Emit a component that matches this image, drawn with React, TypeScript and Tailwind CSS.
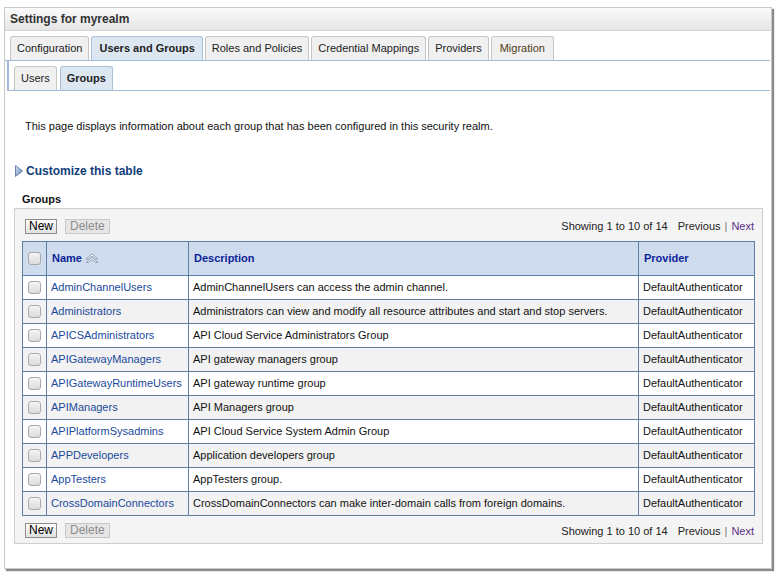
const groups = [
  { name: "AdminChannelUsers", desc: "AdminChannelUsers can access the admin channel." },
  { name: "Administrators", desc: "Administrators can view and modify all resource attributes and start and stop servers." },
  { name: "APICSAdministrators", desc: "API Cloud Service Administrators Group" },
  { name: "APIGatewayManagers", desc: "API gateway managers group" },
  { name: "APIGatewayRuntimeUsers", desc: "API gateway runtime group" },
  { name: "APIManagers", desc: "API Managers group" },
  { name: "APIPlatformSysadmins", desc: "API Cloud Service System Admin Group" },
  { name: "APPDevelopers", desc: "Application developers group" },
  { name: "AppTesters", desc: "AppTesters group." },
  { name: "CrossDomainConnectors", desc: "CrossDomainConnectors can make inter-domain calls from foreign domains." },
];

const tabs = [
  "Configuration",
  "Users and Groups",
  "Roles and Policies",
  "Credential Mappings",
  "Providers",
  "Migration",
];

const Checkbox = () => (
  <span className="inline-block w-[13px] h-[13px] rounded-[3px] border border-[#a9a9a9] bg-gradient-to-b from-[#f4f4f4] to-[#dcdcdc] align-middle" />
);

const Buttons = () => (
  <div className="flex gap-[8px]">
    <button className="h-[15px] px-[3px] border border-[#8c8c8c] bg-gradient-to-b from-[#fdfdfd] to-[#e2e2e2] text-[12px] leading-[13px] text-black">
      New
    </button>
    <button className="h-[15px] px-[4px] border border-[#c8c8c8] bg-[#e6e6e6] text-[12px] leading-[13px] text-[#8c8c8c]">
      Delete
    </button>
  </div>
);

const Pager = () => (
  <div className="text-[11px] text-[#222]">
    Showing 1 to 10 of 14
    <span className="ml-[10px]">Previous</span>
    <span className="mx-[4px] text-[#777]">|</span>
    <span className="text-[#5b2e86]">Next</span>
  </div>
);

const SortIcon = () => (
  <svg width="14" height="10" viewBox="0 0 14 10" className="inline-block ml-[3px] align-[-1px]">
    <path d="M1 6 L7 1 L13 6 L11 6 L7 3 L3 6 Z" fill="#fff" stroke="#8a9bb5" strokeWidth="0.9" />
    <path d="M1 9.5 L7 4.5 L13 9.5 L11 9.5 L7 6.5 L3 9.5 Z" fill="#fff" stroke="#8a9bb5" strokeWidth="0.9" />
  </svg>
);

export default function App() {
  return (
    <div className="w-[778px] h-[577px] bg-white pt-[7px] pl-[4px] font-['Liberation_Sans',Arial,sans-serif]">
      <div className="w-[768px] h-[562px] border border-[#c9c9c9] bg-white shadow-[2px_2px_1px_#8a8a8a]">
        {/* title bar */}
        <div className="h-[23px] px-[5px] flex items-center bg-gradient-to-b from-[#fbfbfb] to-[#e5e5e5] border-b border-[#d4d4d4] text-[12px] font-bold text-[#333]">
          Settings for myrealm
        </div>

        {/* main tabs */}
        <div className="mt-[5px] pl-[5px] flex gap-[2px] border-b border-[#9fbad6] mr-[1px]">
          {tabs.map((t) => {
            const active = t === "Users and Groups";
            return (
              <div
                key={t}
                className={
                  active
                    ? "h-[24px] px-[7px] flex items-center rounded-t-[3px] border border-b-0 border-[#a9c0d9] bg-[#dce7f2] text-[11px] font-bold text-[#222]"
                    : t === "Migration"
                    ? "h-[24px] px-[8px] flex items-center rounded-t-[3px] border border-b-0 border-[#c6c6c6] bg-[#f0f0f0] text-[11px] text-[#4e3d16]"
                    : "h-[24px] px-[6px] flex items-center rounded-t-[3px] border border-b-0 border-[#c6c6c6] bg-[#f0f0f0] text-[11px] text-[#222]"
                }
              >
                {t}
              </div>
            );
          })}
        </div>

        {/* sub tabs */}
        <div className="ml-[2px] mr-[1px] pt-[5px] pl-[5px] flex gap-[3px] border-l-2 border-b border-[#9fbad6]">
          <div className="h-[24px] px-[6px] flex items-center rounded-t-[3px] border border-b-0 border-[#c6c6c6] bg-[#f0f0f0] text-[11px] text-[#222]">
            Users
          </div>
          <div className="h-[24px] px-[6px] flex items-center rounded-t-[3px] border border-b-0 border-[#a9c0d9] bg-[#dce7f2] text-[11px] font-bold text-[#222]">
            Groups
          </div>
        </div>

        <p className="mt-[27px] ml-[20px] text-[11px] text-[#111]">
          This page displays information about each group that has been configured in this security realm.
        </p>

        <div className="mt-[27px] ml-[10px] flex items-center gap-[3px] text-[12px] font-bold text-[#11407a]">
          <svg width="8" height="12" viewBox="0 0 8 12">
            <defs>
              <linearGradient id="tri" x1="0" y1="0" x2="1" y2="1">
                <stop offset="0" stopColor="#dbe6f3" />
                <stop offset="1" stopColor="#5d7fb0" />
              </linearGradient>
            </defs>
            <path d="M0.5 0.5 L7.5 6 L0.5 11.5 Z" fill="url(#tri)" stroke="#4c6c9c" strokeWidth="0.8" />
          </svg>
          Customize this table
        </div>

        <div className="mt-[11px] ml-[17px] text-[11px] font-bold text-[#111]">Groups</div>

        <div className="mt-[1px] ml-[9px] w-[749px] h-[336px] border border-[#cfcfcf] bg-[#f4f4f4] pt-[9px] px-[7px]">
          <div className="flex items-center justify-between pl-[3px] pr-[1px]">
            <Buttons />
            <Pager />
          </div>

          <table className="mt-[6px] w-[733px] border-collapse bg-white text-[11px]">
            <thead>
              <tr className="h-[34px] bg-[#cfdcee]">
                <th className="w-[24px] border border-[#5f7ea3] text-center"><Checkbox /></th>
                <th className="w-[142px] border border-[#5f7ea3] text-left pl-[5px] text-[11px] font-bold text-[#0d1f99]">
                  Name<SortIcon />
                </th>
                <th className="w-[450px] border border-[#5f7ea3] text-left pl-[5px] text-[11px] font-bold text-[#0d1f99]">
                  Description
                </th>
                <th className="border border-[#5f7ea3] text-left pl-[5px] text-[11px] font-bold text-[#0d1f99]">
                  Provider
                </th>
              </tr>
            </thead>
            <tbody>
              {groups.map((g, i) => (
                <tr key={g.name} className={i % 2 === 1 ? "h-[24px] bg-[#f2f2f2]" : "h-[24px] bg-white"}>
                  <td className="border border-[#5f7ea3] text-center"><Checkbox /></td>
                  <td className="border border-[#5f7ea3] pl-[4px] text-[#1a4a9a]">{g.name}</td>
                  <td className="border border-[#5f7ea3] pl-[4px] text-[#111]">{g.desc}</td>
                  <td className="border border-[#5f7ea3] pl-[4px] text-[#111]">DefaultAuthenticator</td>
                </tr>
              ))}
            </tbody>
          </table>

          <div className="mt-[7px] flex items-center justify-between pl-[3px] pr-[1px]">
            <Buttons />
            <Pager />
          </div>
        </div>
      </div>
    </div>
  );
}
